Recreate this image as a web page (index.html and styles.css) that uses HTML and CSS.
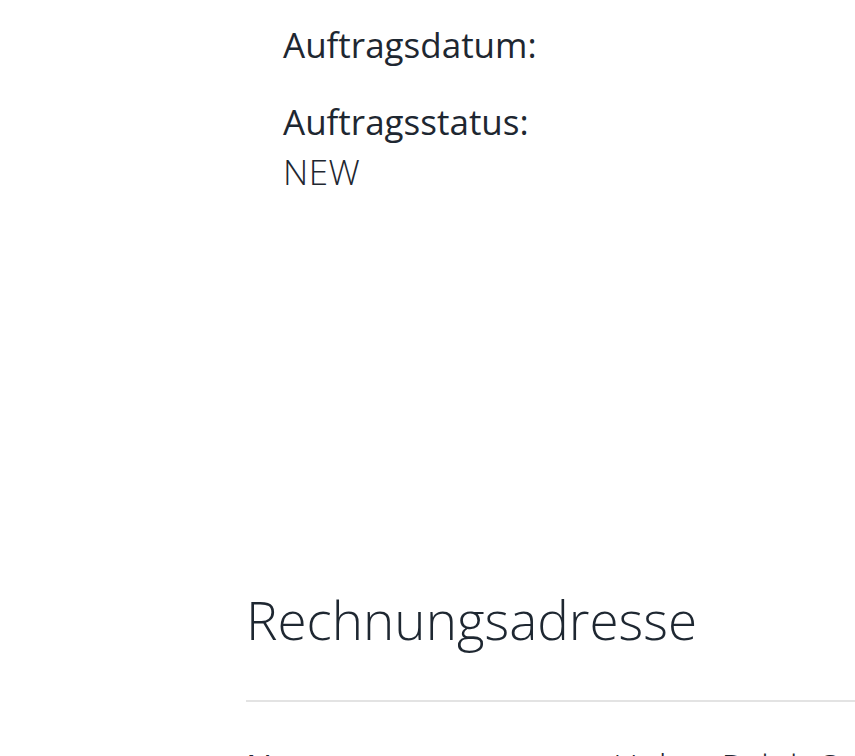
FILE: index.html
```html
<!DOCTYPE html>
<html lang="de">
<head>
    <meta charset="UTF-8">
    <meta name="viewport" content="width=device-width, initial-scale=1.0">
    <title>Auftrag</title>
    <link rel="stylesheet" href="styles.css">
</head>
<body>
    <div class="page">
        <div class="order-info">
            <div class="info-item">
                <div class="info-label">Auftragsdatum:</div>
                <div class="info-value"></div>
            </div>
            <div class="info-item">
                <div class="info-label">Auftragsstatus:</div>
                <div class="info-value">NEW</div>
            </div>
        </div>
        <section class="address">
            <h2>Rechnungsadresse</h2>
            <div class="address-row">
                <div class="address-label">Name</div>
                <div class="address-value">Huber Ralph Stefan</div>
            </div>
        </section>
    </div>
</body>
</html>
```
FILE: styles.css
```css
* {
    margin: 0;
    padding: 0;
    box-sizing: border-box;
}
body {
    font-family: "Open Sans", sans-serif;
    color: #1e2731;
    background: #fff;
    overflow: hidden;
}
.page {
    padding-left: 246px;
}
.order-info {
    padding-left: 37px;
    padding-top: 20px;
    height: 580px;
}
.info-item {
    margin-bottom: 27px;
}
.info-label {
    font-size: 35px;
    font-weight: 500;
    line-height: 50px;
}
.info-value {
    font-size: 35px;
    font-weight: 300;
    line-height: 50px;
    letter-spacing: 0.5px;
}
.address h2 {
    font-size: 53px;
    font-weight: 300;
    line-height: 80px;
    padding-bottom: 40px;
    border-bottom: 2px solid #e3e3e3;
}
.address-row {
    display: flex;
    overflow: hidden;
    padding-top: 40px;
    font-size: 35px;
    line-height: 50px;
}
.address-label {
    flex-shrink: 0;
    width: 367px;
    font-weight: 500;
}
.address-value {
    font-weight: 300;
    white-space: nowrap;
}
```
